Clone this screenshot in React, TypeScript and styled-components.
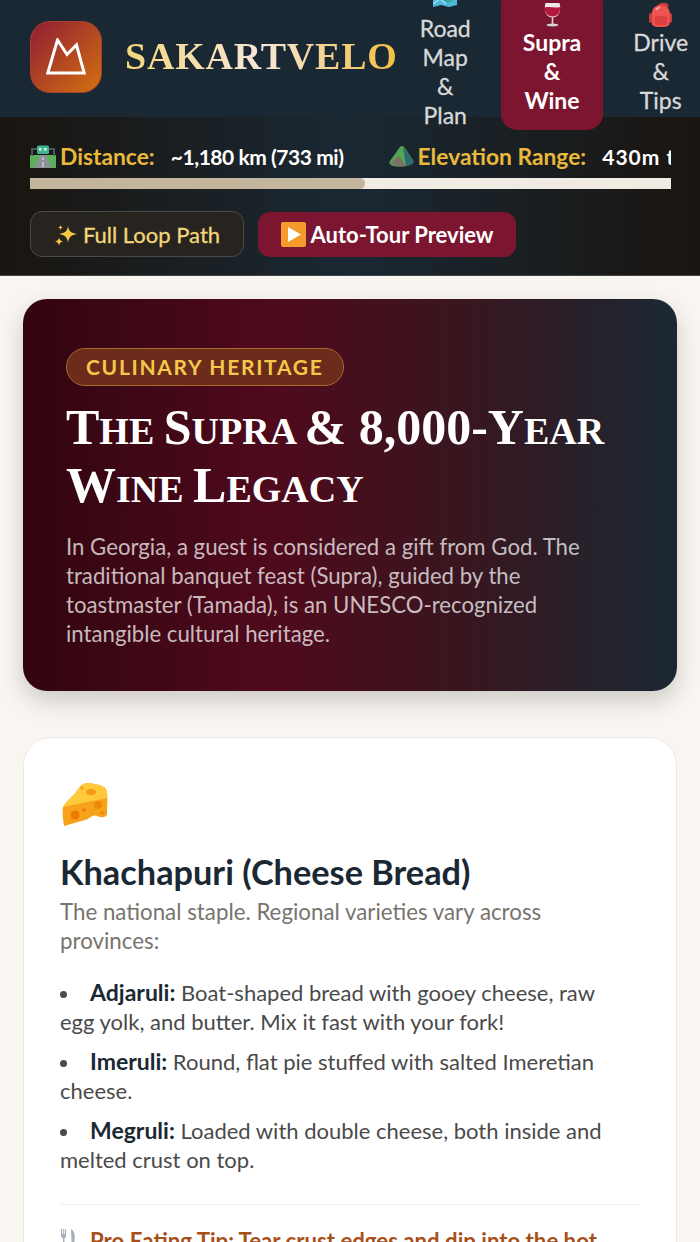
import React from "react";
import styled, { createGlobalStyle } from "styled-components";

const SANS = `"Lato", "Noto Sans", "Liberation Sans", sans-serif`;
const SERIF = `"Liberation Serif", "DejaVu Serif", serif`;

const GlobalStyle = createGlobalStyle`
  html, body {
    margin: 0;
    padding: 0;
    background: #f9f6f1;
    font-family: ${SANS};
    overflow-x: hidden;
  }
  * { box-sizing: border-box; }
`;

const LogoMark = () => (
  <svg width="40" height="37" viewBox="0 0 40 37" fill="none">
    <path d="M1.800 35 L11.500 2 L21 16.500 L30.500 7 L38.200 35 Z" stroke="#fff" strokeWidth="3" strokeLinejoin="miter" />
  </svg>
);

const MapIcon = () => (
  <svg width="26" height="19" viewBox="0 0 26 19">
    <path d="M1 2 L9 0 L17 2 L25 0 V17 L17 19 L9 17 L1 19 Z" fill="#4bb8dc" />
    <path d="M4 5 L12 3 L20 9 L24 6 V11 L16 15 L8 10 Z" fill="#3aa99a" />
    <path d="M1 16 L8 11 L14 16" stroke="#d8f2fa" strokeWidth="1" fill="none" />
  </svg>
);

const WineIcon = () => (
  <svg width="17" height="25" viewBox="0 0 17 25">
    <path d="M1.500 1 H15.500 C17 6 16.500 15.500 8.500 15.500 C0.500 15.500 0 6 1.500 1 Z" fill="#ece7e9" />
    <path d="M1 5.500 C5 4 11 6.500 16 5 C16.500 10 14 14.500 8.500 14.500 C3 14.500 0.500 10 1 5.500 Z" fill="#b5173f" />
    <rect x="7.700" y="15" width="1.600" height="7" fill="#d8d4d6" />
    <ellipse cx="8.500" cy="23" rx="6" ry="1.500" fill="#d8d4d6" />
  </svg>
);

const PackIcon = () => (
  <svg width="25" height="25" viewBox="0 0 25 25">
    <path d="M9 5 C10 1 14 0 18 1 C21 2 21 4 20 6 L17 4 C14 3 12 4 11 7 Z" fill="#c93c3c" />
    <rect x="1" y="11" width="4" height="10" rx="2" fill="#c93c3c" />
    <rect x="20" y="11" width="4" height="10" rx="2" fill="#c93c3c" />
    <path d="M4 11 C4 6 8 3 13 3 C18 3 22 7 22 12 L21.500 22 C21 24.500 17 25 12.500 25 C8 25 4.500 24.500 4 22 Z" fill="#ef5350" />
    <path d="M7 15 C10 13.500 16 13.500 19 15 V22 C16 23.500 10 23.500 7 22 Z" fill="#d9403f" />
    <path d="M8 8 C9 6 10.500 5.500 12 5.500" stroke="#ffb0a8" strokeWidth="1.600" fill="none" />
  </svg>
);

const RoadIcon = () => (
  <svg width="26" height="23" viewBox="0 0 26 23">
    <rect x="0" y="10" width="26" height="13" fill="#5bb15a" />
    <path d="M10 10 H16 L22 23 H4 Z" fill="#8c9196" />
    <path d="M12.500 12 h1 v3 h-1z M12.500 17 h1 v5 h-1z" fill="#e8e8e8" />
    <rect x="1" y="4" width="2" height="7" fill="#4a5860" />
    <rect x="23" y="4" width="2" height="7" fill="#4a5860" />
    <rect x="1" y="3" width="24" height="2" fill="#4a5860" />
    <rect x="7" y="0.500" width="12" height="8.500" rx="1.500" fill="#3fb58d" />
    <rect x="9" y="3" width="2.500" height="2.500" fill="#d8f5ea" />
    <rect x="14" y="3" width="2.500" height="2.500" fill="#d8f5ea" />
  </svg>
);

const PeakIcon = () => (
  <svg width="25" height="22" viewBox="0 0 25 22">
    <path d="M13 1 C14 1 15 2 16 3 L24.500 16 C25 18 23 19 21 20 C15 22 6 22 2 20 C0 19 0 17 1 16 L11 2 C11.500 1.500 12 1 13 1 Z" fill="#55a552" />
    <path d="M14 1.500 L24.500 16 C25 18 22 20 17 21 Z" fill="#2c6b72" />
    <path d="M1.500 18 L10 11 L17 21 C12 22 5 21 1.500 18 Z" fill="#7d7166" />
  </svg>
);

const SparkleIcon = () => (
  <svg width="24" height="24" viewBox="0 0 24 24" fill="#f5c842">
    <path d="M14 4 C15 9.500 17 11 23 12 C17 13 15 15 14 20.500 C13 15 11 13 5 12 C11 11 13 9.500 14 4 Z" />
    <path d="M5 15.500 C5.500 18 6.500 19 9 19.500 C6.500 20 5.500 21 5 23.500 C4.500 21 3.500 20 1 19.500 C3.500 19 4.500 18 5 15.500 Z" />
    <path d="M6.500 3 C6.800 4.500 7.500 5.200 9 5.500 C7.500 5.800 6.800 6.500 6.500 8 C6.200 6.500 5.500 5.800 4 5.500 C5.500 5.200 6.200 4.500 6.500 3 Z" />
  </svg>
);

const PlayIcon = () => (
  <svg width="25" height="25" viewBox="0 0 25 25">
    <rect width="25" height="25" rx="2" fill="#f59b2b" />
    <path d="M7 5 L20 12.500 L7 20 Z" fill="#fff" />
  </svg>
);

const CheeseIcon = () => (
  <svg width="46" height="45" viewBox="0 0 46 45">
    <path d="M1 25 C5 18 13 13 17 6 C20 1 27 0 32 2 C38 3 44 4 45 10 C46 16 45 24 45 32 C44 36 39 36 35 34 C30 32 28 37 23 38 L2 44 C1 38 0 31 1 25 Z" fill="#f7a21b" />
    <path d="M1 25 C5 18 13 13 17 6 C20 1 27 0 32 2 C38 3 44 4 45 10 L45 16 Z" fill="#ffc93c" />
    <ellipse cx="29" cy="10" rx="5" ry="3.200" fill="#f59a1b" />
    <circle cx="20" cy="6" r="1.600" fill="#f59a1b" />
    <circle cx="13" cy="33" r="4.500" fill="#ed7a06" />
    <circle cx="36" cy="23" r="4" fill="#ed8a0b" />
    <circle cx="40" cy="31" r="2" fill="#ed8a0b" />
    <circle cx="22" cy="28" r="1.800" fill="#ed7a06" />
  </svg>
);

const CutleryIcon = () => (
  <svg width="16" height="24" viewBox="0 0 16 24">
    <path d="M1 0 V6 C1 8 2 9 3 9 V24 H4.500 V9 C5.500 9 6 8 6 6 V0 H5 V5 H4.200 V0 H3.200 V5 H2.200 V0 Z" fill="#a4adb8" />
    <path d="M11 0 C15 2 15 8 14.500 11 V24 H12 Z" fill="#a4adb8" />
  </svg>
);

const NAV = [
  { label: "Road Map & Plan", icon: <MapIcon />, active: false },
  { label: "Supra & Wine", icon: <WineIcon />, active: true },
  { label: "Drive & Tips", icon: <PackIcon />, active: false },
];

const App: React.FC = () => (
  <Page>
    <GlobalStyle />
    <Header>
      <Logo>
        <LogoMark />
      </Logo>
      <Brand>SAKARTVELO</Brand>
      <Nav>
        {NAV.map((item) => (
          <NavItem key={item.label} $active={item.active}>
            <NavIcon>{item.icon}</NavIcon>
            {item.label}
          </NavItem>
        ))}
      </Nav>
    </Header>

    <StatsBar>
      <StatRow>
        <Stat>
          <RoadIcon />
          <StatLabel>Distance:</StatLabel>
          <StatValue $tracking={-0.45}>~1,180 km (733 mi)</StatValue>
        </Stat>
        <Stat>
          <PeakIcon />
          <StatLabel>Elevation Range:</StatLabel>
          <StatValue $tracking={1}>430m to 2,400m</StatValue>
        </Stat>
      </StatRow>
      <Track>
        <TrackFill style={{ width: `${(335 / 641) * 100}%` }} />
      </Track>
      <ButtonRow>
        <GhostButton>
          <SparkleIcon />
          Full Loop Path
        </GhostButton>
        <PrimaryButton>
          <PlayIcon />
          Auto-Tour Preview
        </PrimaryButton>
      </ButtonRow>
    </StatsBar>

    <Main>
      <Hero>
        <Badge>CULINARY HERITAGE</Badge>
        <HeroTitle>
          <Cap>T</Cap>he <Cap>S</Cap>upra <Cap>&amp; 8,000-Y</Cap>ear <Cap>W</Cap>ine <Cap>L</Cap>egacy
        </HeroTitle>
        <HeroText>
          In Georgia, a guest is considered a gift from God. The traditional banquet feast (Supra), guided by the
          toastmaster (Tamada), is an UNESCO-recognized intangible cultural heritage.
        </HeroText>
      </Hero>

      <Card>
        <CardIcon>
          <CheeseIcon />
        </CardIcon>
        <CardTitle>Khachapuri (Cheese Bread)</CardTitle>
        <CardLead>The national staple. Regional varieties vary across provinces:</CardLead>
        <VarietyList>
          <li>
            <strong>Adjaruli:</strong> Boat-shaped bread with gooey cheese, raw egg yolk, and butter. Mix it fast with
            your fork!
          </li>
          <li>
            <strong>Imeruli:</strong> Round, flat pie stuffed with salted Imeretian cheese.
          </li>
          <li>
            <strong>Megruli:</strong> Loaded with double cheese, both inside and melted crust on top.
          </li>
        </VarietyList>
        <Tip>
          <CutleryIcon />
          Pro Eating Tip: Tear crust edges and dip into the hot
        </Tip>
      </Card>
    </Main>
  </Page>
);

export default App;

const Page = styled.div`
  width: 700px;
  height: 1242px;
  overflow: hidden;
  background: #f9f6f1;
`;

const Header = styled.header`
  height: 117px;
  background: #1a2833;
  padding-left: 30px;
  display: flex;
  align-items: center;
  position: relative;
  z-index: 2;
`;

const Logo = styled.div`
  width: 72px;
  height: 72px;
  flex-shrink: 0;
  margin-bottom: 4px;
  border-radius: 20px;
  border: 1px solid #a5432a;
  background: linear-gradient(135deg, #8f1d35, #d4700f);
  display: flex;
  align-items: center;
  justify-content: center;
`;

const Brand = styled.div`
  margin: 0 0 6px 23px;
  flex-shrink: 0;
  font-family: ${SERIF};
  font-weight: 700;
  font-size: 38px;
  letter-spacing: 0.8px;
  background: linear-gradient(90deg, #f5d77a, #f7e6da 50%, #f0c040);
  -webkit-background-clip: text;
  background-clip: text;
  color: transparent;
`;

const Nav = styled.nav`
  margin-top: 1px;
  display: flex;
  align-items: center;
  gap: 8px;
  flex-shrink: 0;
`;

const NavItem = styled.div<{ $active: boolean }>`
  width: min-content;
  padding: 14px 22px 15px;
  border-radius: 16px;
  text-align: center;
  font-size: 23px;
  line-height: 29px;
  font-weight: ${(p) => (p.$active ? 700 : 400)};
  -webkit-text-stroke: ${(p) => (p.$active ? 0 : "0.3px")};
  color: ${(p) => (p.$active ? "#ffffff" : "#d9d9d9")};
  background: ${(p) => (p.$active ? "#7c1530" : "transparent")};
`;

const NavIcon = styled.div`
  height: 26px;
  display: flex;
  justify-content: center;
  align-items: flex-start;
`;

const StatsBar = styled.section`
  height: 159px;
  padding: 25px 29px 0 30px;
  background: linear-gradient(90deg, #1a1510, #1a2833 50%, #1a1510);
  border-bottom: 1px solid #444;
`;

const StatRow = styled.div`
  display: flex;
  gap: 45px;
  overflow: hidden;
  white-space: nowrap;
  height: 28px;
`;

const Stat = styled.div`
  display: flex;
  align-items: center;
  flex-shrink: 0;
  gap: 4px;
`;

const StatLabel = styled.span`
  font-size: 22.800px;
  font-weight: 700;
  color: #e9b93c;
`;

const StatValue = styled.span<{ $tracking: number }>`
  margin-left: 12px;
  font-size: 21px;
  font-weight: 700;
  letter-spacing: ${(p) => p.$tracking}px;
  color: #ffffff;
`;

const Track = styled.div`
  margin-top: 8px;
  height: 11px;
  background: #f0ece3;
`;

const TrackFill = styled.div`
  height: 100%;
  background: #c4b59d;
  border-radius: 0 5px 5px 0;
`;

const ButtonRow = styled.div`
  margin-top: 22px;
  display: flex;
  align-items: flex-end;
  gap: 14px;
`;

const GhostButton = styled.div`
  height: 46px;
  width: 214px;
  display: flex;
  align-items: center;
  justify-content: center;
  gap: 5px;
  border: 1px solid #4a4a48;
  border-radius: 12px;
  background: #27231f;
  color: #f3d67a;
  font-size: 22px;
  -webkit-text-stroke: 0.3px;
`;

const PrimaryButton = styled.div`
  height: 45px;
  width: 258px;
  display: flex;
  align-items: center;
  justify-content: center;
  gap: 5px;
  border-radius: 12px;
  background: #7c1530;
  color: #ffffff;
  font-size: 22px;
  font-weight: 700;
`;

const Main = styled.main`
  padding: 23px 23px 0;
  display: flex;
  flex-direction: column;
  gap: 46px;
`;

const Hero = styled.section`
  height: 392px;
  padding: 49px 43px 0;
  border-radius: 24px;
  background: linear-gradient(90deg, #31050f, #4f0a1d 38%, #38161f 68%, #1a2833);
  box-shadow: 0 10px 24px rgba(0, 0, 0, 0.18);
`;

const Badge = styled.div`
  display: inline-block;
  height: 38px;
  padding: 0 19px;
  line-height: 36px;
  border: 1px solid #a9692c;
  border-radius: 19px;
  background: #6b2c1b;
  color: #f5c84c;
  font-size: 21px;
  font-weight: 700;
  letter-spacing: 1.700px;
`;

const HeroTitle = styled.h1`
  margin: 16px 0 0;
  font-family: ${SERIF};
  text-transform: uppercase;
  font-size: 38px;
  line-height: 58px;
  font-weight: 700;
  color: #ffffff;
`;

const Cap = styled.span`
  font-size: 50px;
  line-height: 1;
`;

const HeroText = styled.p`
  margin: 14px 0 0;
  width: 530px;
  font-size: 22.200px;
  line-height: 29px;
  color: rgba(255, 255, 255, 0.72);
`;

const Card = styled.section`
  padding: 44px 36px 0;
  border-radius: 28px;
  border: 1px solid #ece9e4;
  background: #ffffff;
  height: 700px;
  flex-shrink: 0;
`;

const CardIcon = styled.div`
  height: 46px;
  margin-left: 2px;
`;

const CardTitle = styled.h2`
  margin: 23px 0 0;
  font-size: 34.300px;
  line-height: 42px;
  font-weight: 700;
  color: #1a2833;
`;

const CardLead = styled.p`
  margin: 4px 0 0;
  font-size: 22.300px;
  line-height: 29px;
  color: #77746e;
`;

const VarietyList = styled.ul`
  list-style: disc inside;
  margin: 23px 8px 0 0;
  padding: 0;
  font-size: 22px;
  line-height: 29px;
  color: #4a4a4a;
  li + li {
    margin-top: 11px;
  }
  strong {
    font-size: 23px;
    color: #1a2833;
  }
`;

const Tip = styled.div`
  margin-top: 30px;
  padding-top: 22px;
  border-top: 1px solid #f0eeea;
  display: flex;
  align-items: center;
  gap: 14px;
  white-space: nowrap;
  font-size: 22.200px;
  font-weight: 700;
  color: #a8501a;
`;
